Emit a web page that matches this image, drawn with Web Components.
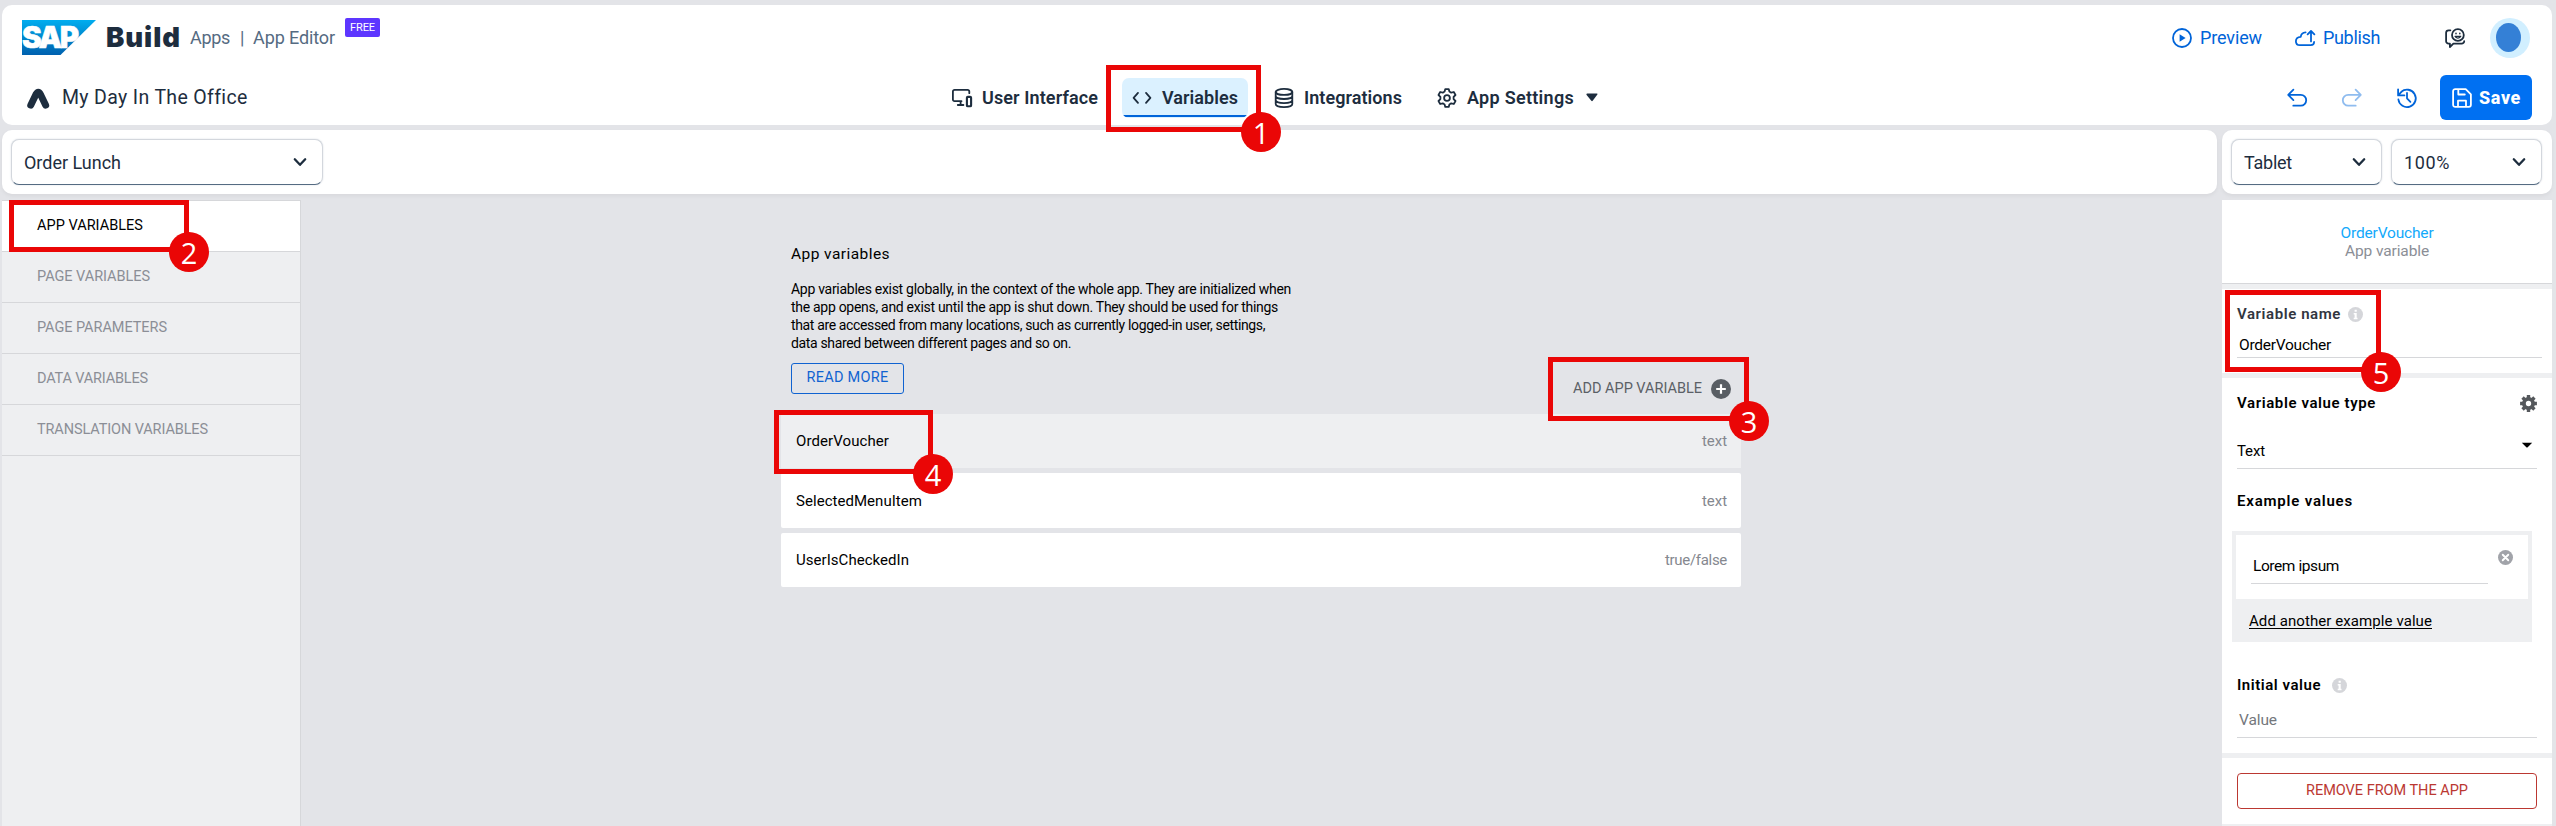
<!DOCTYPE html>
<html lang="en">
<head>
<meta charset="utf-8">
<title>SAP Build Apps – App Editor</title>
<style>
html,body{margin:0;height:100%;background:#e3e4e8;overflow:hidden}
body{font-family:Roboto,"Liberation Sans",sans-serif;font-size:15px;color:#000}
</style>
</head>
<body>
<build-app></build-app>
<script>
const define = (name, html, setup) => {
  const tpl = document.createElement('template');
  tpl.innerHTML = html;
  customElements.define(name, class extends HTMLElement {
    connectedCallback() {
      if (this.shadowRoot) return;
      this.attachShadow({ mode: 'open' }).append(tpl.content.cloneNode(true));
      if (setup) setup(this, this.shadowRoot);
    }
  });
};

/* Single-line label whose tracking is adjusted to fill a given width. */
define('fit-text', `<style>:host{display:block;flex:none;white-space:nowrap;overflow:visible}span{display:inline-block}:host([underline]) span{text-decoration:underline;text-underline-offset:2px}</style><span><slot></slot></span>`, (el, root) => {
  const w = +el.getAttribute('w'), s = root.querySelector('span');
  el.style.width = w + 'px';
  if (el.hasAttribute('size')) el.style.fontSize = el.getAttribute('size') + 'px';
  const n = el.textContent.length;
  s.style.letterSpacing = '0px';
  s.style.letterSpacing = ((w - s.getBoundingClientRect().width) / n).toFixed(3) + 'px';
});

const ICONS = {
  devices: `<path d="M9.5 13.2H2.5a1.6 1.6 0 0 1-1.6-1.6V3.4a1.6 1.6 0 0 1 1.6-1.6h13.2a1.6 1.6 0 0 1 1.6 1.6v1.8M8.6 13.2v3.6M5.8 17h5.6"/><rect x="14.9" y="8.9" width="4.2" height="9.4" rx=".9" stroke-width="2.1"/>`,
  code: `<path d="M6 4.9 1.6 9.9 6 14.9M14 4.9l4.4 5-4.4 5"/>`,
  database: `<ellipse cx="10" cy="3.9" rx="8.3" ry="3"/><path d="M1.7 4v12.1c0 1.7 3.7 3 8.3 3s8.3-1.300 8.300-3V4M1.700 8c0 1.700 3.700 3 8.300 3s8.300-1.300 8.300-3M1.700 12.100c0 1.700 3.700 3 8.300 3s8.300-1.300 8.300-3"/>`,
  gear: `<path d="M8.300 1.100h3.400l.7 2.500 1.800 1.100 2.600-.7 1.700 3-1.900 1.900v2.200l1.900 1.900-1.700 3-2.600-.7-1.800 1.100-.7 2.500H8.300l-.7-2.500-1.800-1.100-2.600.7-1.700-3 1.900-1.900V8.900L1.500 7l1.700-3 2.600.7 1.800-1.100z"/><circle cx="10" cy="10" r="2.900"/>`,
  play: `<circle cx="10" cy="10" r="9"/><path d="M7.600 6.300v7.400l6-3.700z" fill="currentColor" stroke="none"/>`,
  cloud: `<path d="M10.600 4.400A5.200 5.200 0 0 0 5.700 8.800C2.800 9 .9 10.700 .9 13.200c0 2.300 1.700 4 4 4h10.800c2 0 3.400-1.200 3.400-3.200M16 13.400V3.400M12.600 6.400 16 3l3.400 3.400"/>`,
  feedback: `<path d="M5.400 2.300H3.600A2.500 2.500 0 0 0 1.100 4.800v8.400a2.500 2.500 0 0 0 2.500 2.500h1.300v3.300l3.500-3.300h8.300a2.500 2.500 0 0 0 2.500-2.500"/><circle cx="12.900" cy="7" r="5.900"/><path d="M10 8.300c1 2.300 4.800 2.300 5.800 0z" stroke-width="1.200"/><path d="M11 5.200v.5M14.800 5.200v.5" stroke-width="1.500"/>`,
  undo: `<path d="M6.400 1.600 1.200 6.900l5.200 5.200M1.400 6.900h12.400a5.200 5.200 0 0 1 0 10.800H6.300"/>`,
  redo: `<path d="M13.600 1.600l5.200 5.300-5.200 5.200M18.600 6.900H6.200a5.200 5.200 0 0 0 0 10.800h7.500"/>`,
  history: `<path d="M4.200 3.900A8.700 8.700 0 1 1 1.400 11.500M1.100 1.300v6.100h6.300M1.200 7.200 5 3.300M10 5v5.300l3.400 3.500"/>`,
  save: `<path d="M3.300 1.100h10.400l5.200 5.200v10.500a2.100 2.100 0 0 1-2.100 2.100H3.300a2.100 2.100 0 0 1-2.200-2.100V3.200a2.100 2.100 0 0 1 2.200-2.100zM6.300 1.300v5.200h6.500M6 18.800v-6.100h8v6.100"/>`,
  chevron: `<path d="M4.800 7.300l5.200 5.500 5.200-5.500" stroke-width="2.300"/>`,
  caret: `<path d="M4.400 6.500q0-.9.900-.9h9.400q1.300 0 .7 1l-4.700 6.200q-.7.800-1.400 0L4.600 7z" fill="currentColor" stroke="none"/>`,
  drop: `<path d="M4.800 7.700h10.400l-4.500 4.600q-.7.600-1.400 0z" fill="currentColor" stroke="none"/>`,
  appgyver: `<path d="M4.300 16.500 9.100 6.600q2.100-3.800 4 0l4.800 9.900" stroke-width="6.300"/>`,
  info: `<circle cx="10" cy="10" r="10" fill="#d5d6da" stroke="none"/><path d="M8.800 3.800h2.900v2.500H8.800zM7.600 8.100h4v6.200h1.100v1.900H7.600v-1.900h1.200V10H7.600z" fill="#fff" stroke="none"/>`,
  close: `<circle cx="10" cy="10" r="10" fill="#a1a3a9" stroke="none"/><path d="M6.300 6.300l7.400 7.400M13.700 6.300l-7.400 7.400" stroke="#fff" stroke-width="2.500"/>`,
  plus: `<circle cx="10" cy="10" r="10" fill="#595e64" stroke="none"/><path d="M10 5.200v9.600M5.200 10h9.600" stroke="#fff" stroke-width="2.200" stroke-linecap="butt"/>`,
  cog: `<circle cx="10" cy="10" r="5.400" stroke-width="4.500"/><path d="M10 .1v4M10 15.900v4M.1 10h4M15.900 10h4M3 3l2.900 2.900M14.100 14.100 17 17M17 3l-2.900 2.900M5.900 14.100 3 17" stroke-width="4" stroke-linecap="butt"/>`
};
define('ui-icon', `<style>:host{display:block;flex:none;width:20px;height:20px}svg{display:block;width:100%;height:100%;overflow:visible;fill:none;stroke:currentColor;stroke-width:1.8;stroke-linecap:round;stroke-linejoin:round}</style><svg viewBox="0 0 20 20"></svg>`, (el, root) => {
  root.querySelector('svg').innerHTML = ICONS[el.getAttribute('name')];
  const s = el.getAttribute('size');
  if (s) el.style.width = el.style.height = s + 'px';
});

define('sap-logo', `<style>:host{display:block;flex:none;width:74px;height:35px}svg{display:block}text{font:900 29.500px Inter,Roboto,sans-serif}</style>
<svg width="74" height="35" viewBox="0 0 74 35"><defs><linearGradient id="g" x1="0" y1="0" x2="0" y2="1"><stop offset="0" stop-color="#00adef"/><stop offset=".55" stop-color="#0083ca"/><stop offset="1" stop-color="#0061af"/></linearGradient></defs><path d="M0 0h74L38.500 35H0z" fill="url(#g)"/><text x="0" y="28" fill="#fff" stroke="#fff" stroke-width=".5" textLength="57" lengthAdjust="spacing">SAP</text></svg>`);

define('nav-tab', `<style>
:host{display:flex;flex:none;box-sizing:border-box;height:40px;padding:0 10px;align-items:center;gap:10px;font-weight:600;color:#1d2d3e;border-radius:7px}
:host([active]){background:#dbf1ff;background-image:linear-gradient(#0064d9,#0064d9);background-size:100% 2px;background-position:0 37px;background-repeat:no-repeat;overflow:hidden}
</style><ui-icon></ui-icon><slot></slot>`, (el, r) => {
  const i = document.createElement('ui-icon'); i.setAttribute('name', el.getAttribute('icon'));
  r.querySelector('ui-icon').replaceWith(i);
});

define('select-box', `<style>
:host{display:flex;flex:none;box-sizing:border-box;height:46px;border:1px solid #d3d7dd;border-bottom:1.500px solid #556b82;border-radius:8px;align-items:center;justify-content:space-between;padding:0 12px;color:#1d2d3e;background:#fff;box-shadow:0 0 2px #d9dde3}
</style><slot></slot><ui-icon name="chevron"></ui-icon>`);

define('app-header', `<style>
:host{display:flex;flex-direction:column;gap:5px;box-sizing:border-box;height:120px;padding-bottom:5px;background:#fff;border-radius:10px;color:#1d2d3e}
.row{display:flex;align-items:center;padding:0 20px}
.a{height:65px}.b{height:45px}
.build{font-family:Inter,Roboto,sans-serif;font-weight:900;margin-left:10px;margin-top:-1px}
.muted{color:#556b82;margin-top:-1px}
.badge{align-self:flex-start;box-sizing:border-box;width:35px;height:19px;margin:13px 0 0 10px;background:#5d36ff;border-radius:2px;color:#fff;display:flex;align-items:center;justify-content:center;padding-bottom:1px}
.link{display:flex;align-items:center;gap:8px;color:#0064d9}
.link fit-text{margin-top:-1px}
.sp{flex:1}
.avatar{width:40px;height:40px;border-radius:50%;background:#d1efff;display:flex;align-items:center;margin:0 0 0 25px}
.avatar i{width:25px;height:29px;border-radius:50%;background:#3480d6;margin-left:6px}
.title{margin-left:11px}
.blue{color:#0064d9}.dim{color:#8fbcef}
.save{display:flex;align-items:center;gap:7px;box-sizing:border-box;width:92px;height:45px;padding-left:12px;border-radius:6px;background:#0070f2;color:#fff;font-weight:800}
</style>
<div class="row a"><sap-logo></sap-logo><fit-text class="build" w="75" size="27.500">Build</fit-text>
<fit-text class="muted" style="margin-left:9px" w="40" size="18">Apps</fit-text><fit-text class="muted" style="margin-left:10px" w="4" size="18">|</fit-text><fit-text class="muted" style="margin-left:9px" w="82" size="18">App Editor</fit-text>
<span class="badge"><fit-text w="25" size="11">FREE</fit-text></span>
<span class="sp"></span>
<span class="link"><ui-icon name="play"></ui-icon><fit-text w="62" size="18">Preview</fit-text></span>
<span class="link" style="margin-left:33px"><ui-icon name="cloud"></ui-icon><fit-text w="57" size="18">Publish</fit-text></span>
<ui-icon name="feedback" style="margin-left:65px"></ui-icon><span class="avatar" style="margin-left:25px;margin-right:2px"><i></i></span></div>
<div class="row b"><ui-icon name="appgyver" size="22" style="margin-left:4px;margin-right:3px"></ui-icon><fit-text class="title" w="184" size="19.500">My Day In The Office</fit-text>
<nav-tab icon="devices" style="margin-left:696px"><fit-text w="116" size="18">User Interface</fit-text></nav-tab>
<nav-tab icon="code" active style="margin-left:14px"><fit-text w="76" size="18">Variables</fit-text></nav-tab>
<nav-tab icon="database" style="margin-left:16px"><fit-text w="98" size="18">Integrations</fit-text></nav-tab>
<nav-tab icon="gear" style="margin-left:15px"><fit-text w="107" size="18">App Settings</fit-text><ui-icon name="caret" style="margin-left:-2px"></ui-icon></nav-tab>
<span class="sp"></span>
<ui-icon name="undo" class="blue"></ui-icon><ui-icon name="redo" class="dim" style="margin-left:35px"></ui-icon><ui-icon name="history" class="blue" style="margin-left:35px"></ui-icon>
<span class="save" style="margin-left:23px"><ui-icon name="save"></ui-icon><fit-text w="42" size="18">Save</fit-text></span></div>`);

define('tool-bar', `<style>:host{display:flex;box-sizing:border-box;height:64px;padding:9px;gap:9px;background:#fff;border-radius:10px;box-shadow:0 2px 4px #0000000d}</style><slot></slot>`);

define('side-item', `<style>
:host{display:flex;align-items:center;box-sizing:border-box;height:51px;padding:0 0 1px 35px;border-bottom:1px solid #d6d7da;color:#8b8e96}
:host([active]){background:#fff;color:#000}
</style><slot></slot>`);
define('side-bar', `<style>:host{display:block;box-sizing:border-box;width:299px;border-top:1px solid #d6d7da;border-right:1px solid #d6d7da;background:#eeeff1}</style><slot></slot>`);

define('var-row', `<style>
:host{display:flex;align-items:center;justify-content:space-between;box-sizing:border-box;height:54px;padding:0 14px 0 15px;background:#fff;border-radius:2px}
:host([active]){background:#eeeff1;border-radius:0}
::slotted([slot=type]){color:#85888f}
</style><slot></slot><slot name="type"></slot>`);

define('var-canvas', `<style>
:host{display:block;padding:0 0 0 480px}
.in{width:960px}
.intro{padding-left:10px;padding-top:43px}
.p{margin-top:15px;line-height:18px}
.mid{display:flex;justify-content:space-between;height:51px;margin-top:11px}
.more{box-sizing:border-box;width:113px;height:31px;margin:0 0 0 10px;border:1px solid #1063d1;border-radius:3px;color:#1063d1;display:flex;justify-content:center;line-height:28px}
.add{display:flex;align-items:center;gap:9px;color:#5b6066;height:51px;padding-right:10px}
.rows{display:flex;flex-direction:column;gap:5px}
</style><div class="in"><div class="intro">
<fit-text w="99" size="15.500" style="line-height:22px">App variables</fit-text>
<div class="p"><fit-text w="500" size="14">App variables exist globally, in the context of the whole app. They are initialized when</fit-text>
<fit-text w="487" size="14">the app opens, and exist until the app is shut down. They should be used for things</fit-text>
<fit-text w="474" size="14">that are accessed from many locations, such as currently logged-in user, settings,</fit-text>
<fit-text w="280" size="14">data shared between different pages and so on.</fit-text></div></div>
<div class="mid"><span class="more"><fit-text w="82" size="14.500">READ MORE</fit-text></span><span class="add"><fit-text w="129" size="14.500">ADD APP VARIABLE</fit-text><ui-icon name="plus"></ui-icon></span></div>
<div class="rows">
<var-row active><fit-text w="93" size="15">OrderVoucher</fit-text><fit-text slot="type" w="25" size="15">text</fit-text></var-row>
<var-row style="height:55px"><fit-text w="126" size="15">SelectedMenuItem</fit-text><fit-text slot="type" w="25" size="15">text</fit-text></var-row>
<var-row><fit-text w="113" size="15">UserIsCheckedIn</fit-text><fit-text slot="type" w="62" size="15">true/false</fit-text></var-row>
</div></div>`);

define('prop-panel', `<style>
:host{display:block;width:330px;background:#eeeff1}
section{background:#fff;box-sizing:border-box;padding:0 15px;margin-bottom:5px;line-height:20px}
.head{height:84px;border-bottom:1px solid #d6d7da;display:flex;flex-direction:column;align-items:center;padding-top:24px;line-height:18px}
.line{display:flex;align-items:center}
.b{font-weight:600}
.f{border-bottom:1px solid #d6d7da;box-sizing:border-box;display:flex}
.ex{background:#eeeff1;margin:14px 5px 0 -5px;height:111px;padding:4px;box-sizing:border-box}
.in{background:#fff;height:64px;box-sizing:border-box;padding:15px 15px 0;display:flex;justify-content:space-between}
.btn{box-sizing:border-box;height:36px;border:1px solid #bb3832;border-radius:4px;color:#bb3832;display:flex;justify-content:center;line-height:33px}
</style>
<section class="head"><fit-text w="93" size="15.500" style="color:#12a9fb">OrderVoucher</fit-text><fit-text w="84" size="15.500" style="color:#8b8e96">App variable</fit-text></section>
<section style="height:84px;padding-top:15px"><div class="line"><fit-text class="b" w="104" size="15" style="color:#32363f">Variable name</fit-text><ui-icon name="info" size="15" style="margin-left:7px"></ui-icon></div>
<div class="f" style="margin-right:-5px;height:34px;padding:11px 0 0 2px"><fit-text w="92" size="15.500">OrderVoucher</fit-text></div></section>
<section style="height:375px;padding-top:15px"><div class="line" style="justify-content:space-between"><fit-text class="b" w="139" size="15">Variable value type</fit-text><ui-icon name="cog" size="17" style="color:#55585c"></ui-icon></div>
<div class="f" style="height:56px;padding:28px 0 0;justify-content:space-between"><fit-text w="28" size="15">Text</fit-text><ui-icon name="drop" style="margin:-6px 0 0 0"></ui-icon></div>
<fit-text class="b" w="116" size="15" style="margin-top:22px">Example values</fit-text>
<div class="ex" style="margin-top:20px"><div class="in"><div class="f" style="width:237px;height:34px;padding:6px 0 0 2px"><fit-text w="86" size="15.500">Lorem ipsum</fit-text></div><ui-icon name="close" size="15"></ui-icon></div>
<fit-text underline w="183" size="15" style="margin:12px 0 0 13px">Add another example value</fit-text></div>
<div class="line" style="margin-top:33px"><fit-text class="b" w="84" size="15">Initial value</fit-text><ui-icon name="info" size="15" style="margin-left:11px"></ui-icon></div>
<div class="f" style="height:43px;padding:15px 0 0 2px;color:#74777c"><fit-text w="38" size="15.500">Value</fit-text></div></section>
<section style="height:66px;padding-top:15px"><div class="btn"><fit-text w="162" size="14.500">REMOVE FROM THE APP</fit-text></div></section>`);

/* Numbered tutorial highlight laid over the editor. */
define('call-out', `<style>
:host{position:absolute;box-sizing:border-box;border:5px solid #ea0606;z-index:5}
b{position:absolute;right:-25px;bottom:-25px;width:40px;height:40px;border-radius:50%;background:#ea0606;color:#fff;font:400 29px/41px "Open Sans","Noto Sans",sans-serif;text-align:center}
</style><b><slot></slot></b>`, el => {
  const [x, y, w, h] = el.getAttribute('box').split(' ');
  Object.assign(el.style, { left: x + 'px', top: y + 'px', width: w + 'px', height: h + 'px' });
});

define('build-app', `<style>
:host{display:block;position:relative;width:2556px;height:826px;box-sizing:border-box;padding:5px 4px 0 2px;overflow:hidden}
.bars,.main{display:grid;grid-template-columns:2215px 330px;column-gap:5px}
.bars{margin-top:5px}
.main{margin-top:6px;grid-template-columns:299px 1916px 330px;column-gap:0;height:626px}
.main prop-panel{margin-left:5px}
</style>
<app-header></app-header>
<div class="bars"><tool-bar><select-box style="width:312px"><fit-text w="97" size="18">Order Lunch</fit-text></select-box></tool-bar>
<tool-bar><select-box style="width:151px"><fit-text w="48" size="18">Tablet</fit-text></select-box><select-box style="width:151px"><fit-text w="46" size="18">100%</fit-text></select-box></tool-bar></div>
<div class="main"><side-bar>
<side-item active><fit-text w="106" size="14.500">APP VARIABLES</fit-text></side-item>
<side-item><fit-text w="113" size="14.500">PAGE VARIABLES</fit-text></side-item>
<side-item><fit-text w="130" size="14.500">PAGE PARAMETERS</fit-text></side-item>
<side-item><fit-text w="111" size="14.500">DATA VARIABLES</fit-text></side-item>
<side-item><fit-text w="171" size="14.500">TRANSLATION VARIABLES</fit-text></side-item>
</side-bar><var-canvas></var-canvas><prop-panel></prop-panel></div>
<call-out box="1106 65 155 67">1</call-out>
<call-out box="9 200 180 52">2</call-out>
<call-out box="1548 357 201 64">3</call-out>
<call-out box="774 410 159 64">4</call-out>
<call-out box="2225 290 156 82">5</call-out>`);
</script>
</body>
</html>
